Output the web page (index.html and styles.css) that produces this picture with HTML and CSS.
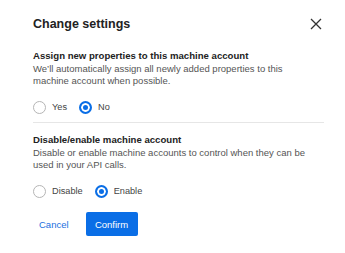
FILE: index.html
```
<!DOCTYPE html>
<html lang="en">
	<head>
		<title>Change settings</title>
		<meta charset="UTF-8">
		<link rel="stylesheet" href="styles.css">
	</head>
	<body>
		<div class="dialog">
			<div class="dialogHeader">
				<h2 class="dialogTitle">Change settings</h2>
				<button class="closeButton" title="Close">
					<svg width="12" height="12" viewBox="0 0 12 12">
						<path d="M1 1 L11 11 M11 1 L1 11" stroke="#333" stroke-width="1.3" fill="none"/>
					</svg>
				</button>
			</div>

			<div class="setting">
				<p class="settingName">Assign new properties to this machine account</p>
				<p class="settingText">We’ll automatically assign all newly added properties to this machine account when possible.</p>
				<div class="choices">
					<label class="choice"><input type="radio" name="assign" value="yes"> Yes</label>
					<label class="choice"><input type="radio" name="assign" value="no" checked> No</label>
				</div>
			</div>

			<div class="setting withLine">
				<p class="settingName">Disable/enable machine account</p>
				<p class="settingText">Disable or enable machine accounts to control when they can be used in your API calls.</p>
				<div class="choices">
					<label class="choice"><input type="radio" name="state" value="disable"> Disable</label>
					<label class="choice"><input type="radio" name="state" value="enable" checked> Enable</label>
				</div>
			</div>

			<div class="actions">
				<button class="buttonCancel">Cancel</button>
				<button class="buttonConfirm">Confirm</button>
			</div>
		</div>
	</body>
</html>
```

FILE: styles.css
```
body {
	margin : 0;
	font-family : "Liberation Sans", Arial, sans-serif;
	background-color : white;
}
p {
	margin : 0;
	padding : 0;
}

.dialog {
	padding : 14px 21px 0 33px;
}
.dialogHeader {
	display : flex;
	justify-content : space-between;
	align-items : center;
	height : 20px;
}
.dialogTitle {
	margin : 0;
	font-size : 12.5px;
	font-weight : bold;
	color : #222;
	line-height : 20px;
}
.closeButton {
	border : none;
	background : none;
	padding : 0;
	margin-right : 2px;
	width : 12px;
	height : 12px;
	display : flex;
	cursor : pointer;
}

.setting {
	margin-top : 15px;
}
.withLine {
	margin-top : 8px;
	padding-top : 10px;
	border-top : 1px solid #e6e6e6;
}
.settingName {
	font-size : 9.6px;
	font-weight : bold;
	color : #222;
	line-height : 14px;
}
.settingText {
	font-size : 9.5px;
	color : #555;
	line-height : 12px;
	padding-right : 5px;
}
.choices {
	display : flex;
	gap : 12px;
	margin-top : 13px;
	height : 14px;
	align-items : center;
}
.choice {
	display : flex;
	align-items : center;
	gap : 6px;
	font-size : 9.2px;
	color : #444;
}
.choice input {
	-webkit-appearance : none;
	appearance : none;
	margin : 0;
	width : 13px;
	height : 13px;
	border : 1px solid #b5b5b5;
	border-radius : 50%;
	background : white;
}
.choice input:checked {
	border : 2px solid #0a6ee6;
	background : #0a6ee6;
	box-shadow : inset 0 0 0 2px white;
}

.actions {
	display : flex;
	gap : 11px;
	margin-top : 14px;
	align-items : center;
}
.buttonCancel {
	border : none;
	background : none;
	padding : 0 6px;
	font-family : inherit;
	font-size : 9.5px;
	color : #1a6fe0;
	cursor : pointer;
}
.buttonConfirm {
	border : none;
	background-color : #0a6ee6;
	color : white;
	font-family : inherit;
	font-size : 9.5px;
	width : 52px;
	height : 24px;
	border-radius : 2px;
	cursor : pointer;
}
```
